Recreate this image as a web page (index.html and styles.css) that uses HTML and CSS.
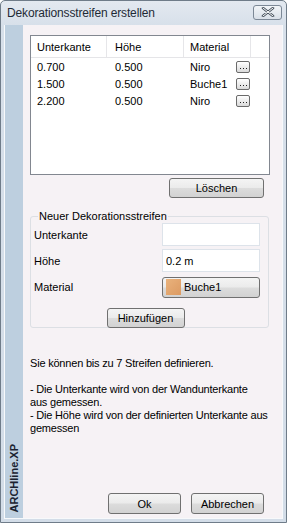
FILE: index.html
```html
<!DOCTYPE html>
<html lang="de">
<head>
    <meta charset="UTF-8">
    <title>Dekorationsstreifen erstellen</title>
    <link rel="stylesheet" href="styles.css">
</head>
<body>
    <div class="window">
        <div class="titlebar">
            <span class="title">Dekorationsstreifen erstellen</span>
            <button class="close" type="button">
                <svg width="14" height="10" viewBox="0 0 14 10">
                    <path d="M2 1 L12 9 M12 1 L2 9" stroke="#4a5560" stroke-width="2.6" stroke-linecap="round"/>
                    <path d="M2 1 L12 9 M12 1 L2 9" stroke="#fff" stroke-width="1" stroke-linecap="round"/>
                </svg>
            </button>
        </div>
        <div class="client">
            <div class="sidebar"><span class="brand">ARCHline.XP</span></div>
            <div class="content">
                <div class="listbox">
                    <div class="row head">
                        <div class="col c1">Unterkante</div>
                        <div class="col c2">Höhe</div>
                        <div class="col c3">Material</div>
                        <div class="col c4"></div>
                    </div>
                    <div class="row">
                        <div class="col c1">0.700</div>
                        <div class="col c2">0.500</div>
                        <div class="col c3">Niro</div>
                        <div class="col c4"><span class="dots"><svg width="12" height="10" viewBox="0 0 12 10"><path d="M3 6h1v1H3zM6 6h1v1H6zM9 6h1v1H9z" fill="#222"/></svg></span></div>
                    </div>
                    <div class="row">
                        <div class="col c1">1.500</div>
                        <div class="col c2">0.500</div>
                        <div class="col c3">Buche1</div>
                        <div class="col c4"><span class="dots"><svg width="12" height="10" viewBox="0 0 12 10"><path d="M3 6h1v1H3zM6 6h1v1H6zM9 6h1v1H9z" fill="#222"/></svg></span></div>
                    </div>
                    <div class="row">
                        <div class="col c1">2.200</div>
                        <div class="col c2">0.500</div>
                        <div class="col c3">Niro</div>
                        <div class="col c4"><span class="dots"><svg width="12" height="10" viewBox="0 0 12 10"><path d="M3 6h1v1H3zM6 6h1v1H6zM9 6h1v1H9z" fill="#222"/></svg></span></div>
                    </div>
                </div>

                <div class="right">
                    <button class="btn btn-delete" type="button">Löschen</button>
                </div>

                <fieldset class="group">
                    <legend>Neuer Dekorationsstreifen</legend>
                    <div class="field">
                        <label>Unterkante</label>
                        <input class="edit" type="text" value="">
                    </div>
                    <div class="field">
                        <label>Höhe</label>
                        <input class="edit" type="text" value="0.2 m">
                    </div>
                    <div class="field">
                        <label>Material</label>
                        <button class="btn btn-material" type="button"><span class="swatch"></span>Buche1</button>
                    </div>
                    <div class="center">
                        <button class="btn btn-add" type="button">Hinzufügen</button>
                    </div>
                </fieldset>

                <p class="info">Sie können bis zu 7 Streifen definieren.<br><br>- Die Unterkante wird von der Wandunterkante<br>aus gemessen.<br>- Die Höhe wird von der definierten Unterkante aus<br>gemessen</p>

                <div class="footer">
                    <button class="btn btn-foot" type="button">Ok</button>
                    <button class="btn btn-foot" type="button">Abbrechen</button>
                </div>
            </div>
        </div>
    </div>
</body>
</html>
```

FILE: styles.css
```css
body {
    margin: 0;
    font-family: "Liberation Sans", Arial, sans-serif;
    font-size: 11px;
    color: #000;
    background: #fff;
}
.window {
    width: 287px;
    height: 523px;
    box-sizing: border-box;
    border: 1px solid #6f7c89;
    border-radius: 5px 5px 0 0;
    background: linear-gradient(#e3e9f0, #d7e0ea 24px, #d3dde8);
    display: flex;
    flex-direction: column;
}
.titlebar {
    height: 23px;
    display: flex;
    align-items: center;
    padding: 0 4px 0 6px;
    flex-shrink: 0;
}
.title {
    font-size: 12px;
    letter-spacing: -0.15px;
    color: #1e2a36;
    flex: 1;
}
.close {
    width: 29px;
    height: 15px;
    margin-top: -1px;
    padding: 0;
    border: 1px solid #7c8896;
    border-radius: 3px;
    background: linear-gradient(#f2f5f8, #d9e0e8);
    display: flex;
    align-items: center;
    justify-content: center;
}
.client {
    flex: 1;
    display: flex;
    margin: 1px 3px 3px 3px;
    border: 1px solid #f7f9fb;
    border-top: none;
    min-height: 0;
}
.sidebar {
    width: 18px;
    flex-shrink: 0;
    background: #bdcfdf;
    display: flex;
    flex-direction: column;
    justify-content: flex-end;
    align-items: center;
    padding-bottom: 6px;
}
.brand {
    writing-mode: vertical-rl;
    transform: rotate(180deg);
    font-weight: bold;
    font-size: 11px;
    color: #1a2230;
}
.content {
    flex: 1;
    min-width: 0;
    background: #f6f2f5;
    padding: 10px 0 0 7px;
    display: flex;
    flex-direction: column;
}
.listbox {
    width: 238px;
    height: 138px;
    border: 1px solid #828790;
    background: #fff;
}
.row {
    display: flex;
    height: 17px;
    align-items: center;
}
.row.head {
    height: 21px;
    border-bottom: 1px solid #e5e5e8;
    background: #fff;
}
.col {
    box-sizing: border-box;
    padding-left: 6px;
    height: 100%;
    display: flex;
    align-items: center;
}
.head .col {
    border-right: 1px solid #e6e6e9;
    padding-top: 1px;
}
.head .c4 {
    border-right: none;
}
.c1 { width: 76px; }
.c2 { width: 77px; padding-left: 8px; }
.c3 { width: 67px; }
.c4 { flex: 1; padding-left: 0; }
.row .c4 .dots {
    margin-left: -15px;
}
.dots {
    width: 12px;
    height: 10px;
    border: 1px solid #6b6b6b;
    border-radius: 2px;
    background: linear-gradient(#ffffff, #dadada);
    display: flex;
}
.right {
    display: flex;
    justify-content: flex-end;
    width: 234px;
    margin-top: 3px;
}
.btn {
    font-family: inherit;
    font-size: 11px;
    color: #000;
    border: 1px solid #707070;
    border-radius: 3px;
    background: linear-gradient(#f4f4f4 0%, #ebebeb 48%, #dcdcdc 52%, #d2d2d2 100%);
    padding: 0;
    height: 20px;
}
.btn-delete {
    width: 95px;
}
.group {
    margin: 13px 0 0 0;
    width: 239px;
    height: 117px;
    box-sizing: border-box;
    border: 1px solid #dcdfe4;
    border-radius: 3px;
    padding: 0 8px 0 3px;
}
.group legend {
    padding: 0 1px;
    margin-left: 4px;
    line-height: 10px;
}
.field {
    display: flex;
    align-items: center;
    justify-content: space-between;
    height: 26px;
}
.field label {
    padding-top: 1px;
}
.edit {
    width: 98px;
    height: 23px;
    box-sizing: border-box;
    border: 1px solid #dde3ea;
    background: #fff;
    font-family: inherit;
    font-size: 11px;
    padding: 2px 3px 0;
}
.btn-material {
    width: 98px;
    height: 21px;
    display: flex;
    align-items: center;
    padding-left: 3px;
    gap: 3px;
    margin-top: 2px;
}
.swatch {
    width: 15px;
    height: 16px;
    background: linear-gradient(135deg, #e9b27c, #dc9a62);
}
.center {
    display: flex;
    justify-content: center;
    margin-top: 9px;
}
.btn-add {
    width: 78px;
    margin-left: -3px;
}
.info {
    margin: 29px 0 0 0;
    line-height: 13px;
    letter-spacing: -0.2px;
    width: 248px;
}
.footer {
    margin-top: auto;
    display: flex;
    justify-content: flex-end;
    gap: 10px;
    width: 234px;
    margin-bottom: 4px;
}
.btn-foot {
    width: 73px;
    height: 21px;
}
```
